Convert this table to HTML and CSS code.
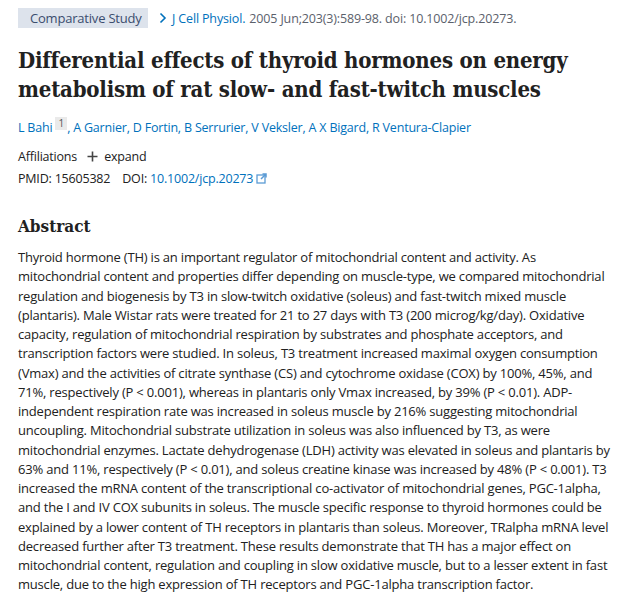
FILE: index.html
```html
<!DOCTYPE html>
<html lang="en">
<head>
<meta charset="utf-8">
<title>Differential effects of thyroid hormones</title>
<link rel="stylesheet" href="styles.css">
</head>
<body>
<main class="article">
  <div class="meta">
    <span class="badge">Comparative Study</span>
    <span class="chev"><svg width="8" height="12" viewBox="0 0 8 12"><path d="M1.5 1.5 L6 6 L1.5 10.5" fill="none" stroke="#0071bc" stroke-width="1.6"/></svg></span>
    <a class="journal" href="#">J Cell Physiol.</a>
    <span class="cite">2005 Jun;203(3):589-98. doi: 10.1002/jcp.20273.</span>
  </div>
  <h1 class="title">Differential effects of thyroid hormones on energy<br>metabolism of rat slow- and fast-twitch muscles</h1>
  <div class="authors">
    <a href="#">L Bahi</a><sup class="aff">1</sup>, <a href="#">A Garnier</a>, <a href="#">D Fortin</a>, <a href="#">B Serrurier</a>, <a href="#">V Veksler</a>, <a href="#">A X Bigard</a>, <a href="#">R Ventura-Clapier</a>
  </div>
  <div class="affil">Affiliations <svg class="plus" width="11" height="11" viewBox="0 0 11 11"><path d="M5.5 0.5 V10.5 M0.5 5.5 H10.5" stroke="#444" stroke-width="1.6"/></svg> expand</div>
  <div class="ids"><span>PMID: 15605382</span><span class="doi">DOI: <a href="#">10.1002/jcp.20273</a><svg class="ext" width="11" height="11" viewBox="0 0 11 11"><rect x="1" y="2" width="8" height="8" fill="none" stroke="#5b9bd5" stroke-width="1.3"/><path d="M5 6 L10 1 M6.5 1 H10 V4.5" fill="none" stroke="#5b9bd5" stroke-width="1.5"/></svg></span></div>
  <h2 class="abs-title">Abstract</h2>
  <p class="abstract">Thyroid hormone (TH) is an important regulator of mitochondrial content and activity. As<br>mitochondrial content and properties differ depending on muscle-type, we compared mitochondrial<br>regulation and biogenesis by T3 in slow-twitch oxidative (soleus) and fast-twitch mixed muscle<br>(plantaris). Male Wistar rats were treated for 21 to 27 days with T3 (200 microg/kg/day). Oxidative<br>capacity, regulation of mitochondrial respiration by substrates and phosphate acceptors, and<br>transcription factors were studied. In soleus, T3 treatment increased maximal oxygen consumption<br>(Vmax) and the activities of citrate synthase (CS) and cytochrome oxidase (COX) by 100%, 45%, and<br>71%, respectively (P &lt; 0.001), whereas in plantaris only Vmax increased, by 39% (P &lt; 0.01). ADP-<br>independent respiration rate was increased in soleus muscle by 216% suggesting mitochondrial<br>uncoupling. Mitochondrial substrate utilization in soleus was also influenced by T3, as were<br>mitochondrial enzymes. Lactate dehydrogenase (LDH) activity was elevated in soleus and plantaris by<br>63% and 11%, respectively (P &lt; 0.01), and soleus creatine kinase was increased by 48% (P &lt; 0.001). T3<br>increased the mRNA content of the transcriptional co-activator of mitochondrial genes, PGC-1alpha,<br>and the I and IV COX subunits in soleus. The muscle specific response to thyroid hormones could be<br>explained by a lower content of TH receptors in plantaris than soleus. Moreover, TRalpha mRNA level<br>decreased further after T3 treatment. These results demonstrate that TH has a major effect on<br>mitochondrial content, regulation and coupling in slow oxidative muscle, but to a lesser extent in fast<br>muscle, due to the high expression of TH receptors and PGC-1alpha transcription factor.</p>
</main>
</body>
</html>
```
FILE: styles.css
```css
html, body { margin: 0; padding: 0; background: #fff; }
body { font-family: "Open Sans", "Noto Sans", sans-serif; color: #212121; }
a { color: #0071bc; text-decoration: none; }
.article { padding: 8px 18px 0 18px; }
.meta { display: flex; align-items: center; font-size: 12.5px; height: 20px; white-space: nowrap; letter-spacing: -0.15px; }
.badge { background: #dde3ec; color: #3b4d6e; height: 20px; line-height: 20px; padding: 0 12px; font-size: 13px; width: 106px; letter-spacing: -0.2px; }
.chev { margin-left: 11px; margin-right: 5px; display: flex; align-items: center; }
.journal { margin-right: 4px; }
.cite { color: #5b616b; }
.title { font-family: "DejaVu Serif", serif; font-stretch: condensed; font-weight: bold; font-size: 22px; line-height: 29px; margin: 18px 0 0 0; color: #212121; white-space: nowrap; letter-spacing: -0.2px; }
.authors { margin-top: 13px; font-size: 12.5px; line-height: 20px; color: #0071bc; letter-spacing: -0.2px; }
.aff { display: inline-block; background: #eaeaea; color: #555; font-size: 10px; line-height: 13px; padding: 0 3px; vertical-align: 5px; margin-left: 3px; letter-spacing: 0; }
.affil { margin-top: 9px; font-size: 12.5px; line-height: 20px; color: #212121; letter-spacing: -0.2px; }
.plus { margin: 0 3px 0 7px; vertical-align: -1px; }
.ids { margin-top: 2px; font-size: 12.5px; line-height: 20px; color: #212121; display: flex; gap: 12px; letter-spacing: -0.2px; }
.ext { margin-left: 3px; vertical-align: -1px; }
.abs-title { font-family: "DejaVu Serif", serif; font-stretch: condensed; font-weight: bold; font-size: 17px; line-height: 24px; margin: 25px 0 0 0; color: #212121; }
.abstract { margin: 10px 0 0 0; font-size: 13px; line-height: 19.25px; color: #212121; white-space: nowrap; letter-spacing: -0.2px; }
```
